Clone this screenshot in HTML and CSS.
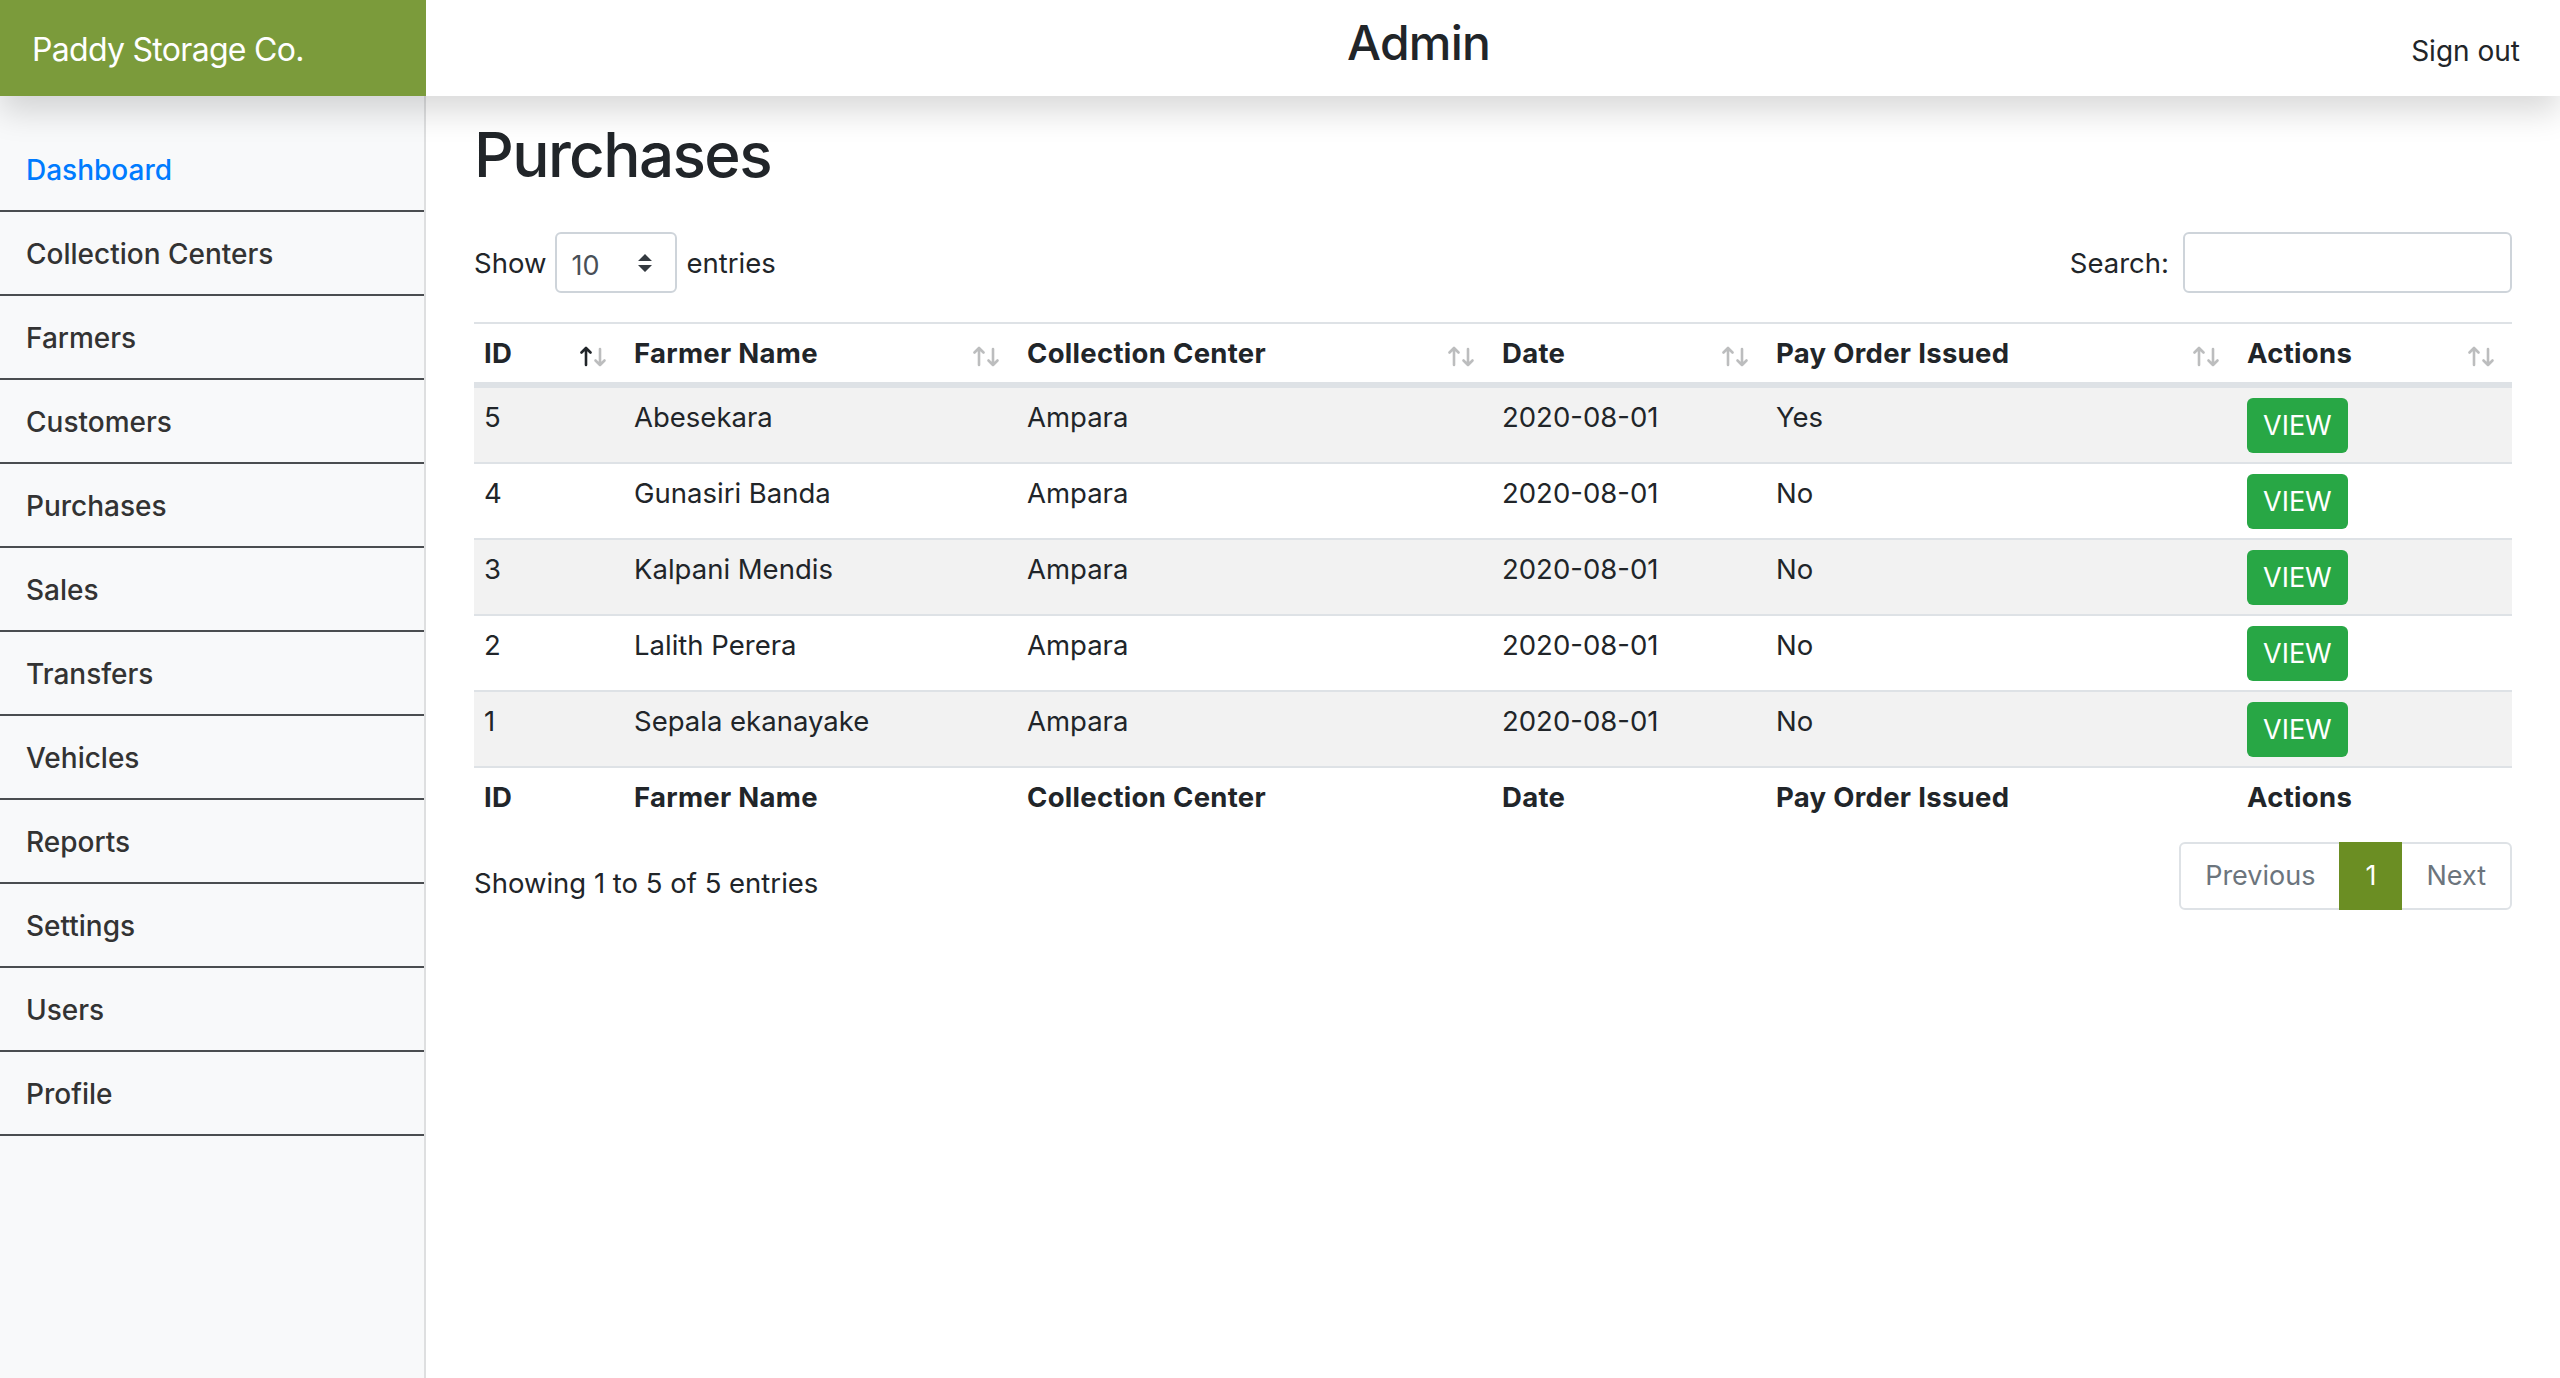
FILE: index.html
```html
<!DOCTYPE html>
<html lang="en">
<head>
<meta charset="utf-8">
<title>Purchases - Paddy Storage Co.</title>
<link rel="stylesheet" href="styles.css">
</head>
<body>
<header class="topbar">
  <a class="brand" href="#">Paddy Storage Co.</a>
  <h1 class="role-title">Admin</h1>
  <nav class="top-nav"><a class="top-link" href="#">Sign out</a></nav>
</header>
<div class="layout">
  <aside class="sidebar">
    <ul class="side-nav">
      <li><a class="side-link active" href="#">Dashboard</a></li>
      <li><a class="side-link" href="#">Collection Centers</a></li>
      <li><a class="side-link" href="#">Farmers</a></li>
      <li><a class="side-link" href="#">Customers</a></li>
      <li><a class="side-link" href="#">Purchases</a></li>
      <li><a class="side-link" href="#">Sales</a></li>
      <li><a class="side-link" href="#">Transfers</a></li>
      <li><a class="side-link" href="#">Vehicles</a></li>
      <li><a class="side-link" href="#">Reports</a></li>
      <li><a class="side-link" href="#">Settings</a></li>
      <li><a class="side-link" href="#">Users</a></li>
      <li><a class="side-link" href="#">Profile</a></li>
    </ul>
  </aside>
  <main class="main">
    <h2 class="page-title">Purchases</h2>
    <div class="dt-controls">
      <div class="dt-length">
        <span>Show</span>
        <div class="fake-select">
          <span>10</span>
          <svg class="select-caret" width="16" height="18" viewBox="0 0 16 18"><path d="M8 0 L15 7 L1 7 Z M8 18 L15 11 L1 11 Z" fill="#343a40"/></svg>
        </div>
        <span>entries</span>
      </div>
      <div class="dt-search">
        <span>Search:</span>
        <div class="search-input"></div>
      </div>
    </div>
    <table class="data-table">
      <colgroup>
        <col class="c-id"><col class="c-name"><col class="c-center"><col class="c-date"><col class="c-pay"><col class="c-act">
      </colgroup>
      <thead>
        <tr>
          <th class="sort sort-asc">ID<svg class="sort-icon" width="27" height="21" viewBox="0 0 27 21"><g fill="none" stroke="#212529" stroke-width="2.6" stroke-linecap="round" stroke-linejoin="round"><path class="ar-up" d="M6 19V2M1.5 6.5L6 2l4.5 4.5"/><path class="ar-down" d="M20 3v16M15.5 14.5L20 19l4.5-4.5"/></g></svg></th>
          <th class="sort">Farmer Name<svg class="sort-icon" width="27" height="21" viewBox="0 0 27 21"><g fill="none" stroke="#212529" stroke-width="2.6" stroke-linecap="round" stroke-linejoin="round"><path class="ar-up" d="M6 19V2M1.5 6.5L6 2l4.5 4.5"/><path class="ar-down" d="M20 3v16M15.5 14.5L20 19l4.5-4.5"/></g></svg></th>
          <th class="sort">Collection Center<svg class="sort-icon" width="27" height="21" viewBox="0 0 27 21"><g fill="none" stroke="#212529" stroke-width="2.6" stroke-linecap="round" stroke-linejoin="round"><path class="ar-up" d="M6 19V2M1.5 6.5L6 2l4.5 4.5"/><path class="ar-down" d="M20 3v16M15.5 14.5L20 19l4.5-4.5"/></g></svg></th>
          <th class="sort">Date<svg class="sort-icon" width="27" height="21" viewBox="0 0 27 21"><g fill="none" stroke="#212529" stroke-width="2.6" stroke-linecap="round" stroke-linejoin="round"><path class="ar-up" d="M6 19V2M1.5 6.5L6 2l4.5 4.5"/><path class="ar-down" d="M20 3v16M15.5 14.5L20 19l4.5-4.5"/></g></svg></th>
          <th class="sort">Pay Order Issued<svg class="sort-icon" width="27" height="21" viewBox="0 0 27 21"><g fill="none" stroke="#212529" stroke-width="2.6" stroke-linecap="round" stroke-linejoin="round"><path class="ar-up" d="M6 19V2M1.5 6.5L6 2l4.5 4.5"/><path class="ar-down" d="M20 3v16M15.5 14.5L20 19l4.5-4.5"/></g></svg></th>
          <th class="sort">Actions<svg class="sort-icon" width="27" height="21" viewBox="0 0 27 21"><g fill="none" stroke="#212529" stroke-width="2.6" stroke-linecap="round" stroke-linejoin="round"><path class="ar-up" d="M6 19V2M1.5 6.5L6 2l4.5 4.5"/><path class="ar-down" d="M20 3v16M15.5 14.5L20 19l4.5-4.5"/></g></svg></th>
        </tr>
      </thead>
      <tbody>
        <tr class="odd"><td>5</td><td>Abesekara</td><td>Ampara</td><td>2020-08-01</td><td>Yes</td><td><a class="btn-view" href="#">VIEW</a></td></tr>
        <tr><td>4</td><td>Gunasiri Banda</td><td>Ampara</td><td>2020-08-01</td><td>No</td><td><a class="btn-view" href="#">VIEW</a></td></tr>
        <tr class="odd"><td>3</td><td>Kalpani Mendis</td><td>Ampara</td><td>2020-08-01</td><td>No</td><td><a class="btn-view" href="#">VIEW</a></td></tr>
        <tr><td>2</td><td>Lalith Perera</td><td>Ampara</td><td>2020-08-01</td><td>No</td><td><a class="btn-view" href="#">VIEW</a></td></tr>
        <tr class="odd"><td>1</td><td>Sepala ekanayake</td><td>Ampara</td><td>2020-08-01</td><td>No</td><td><a class="btn-view" href="#">VIEW</a></td></tr>
      </tbody>
      <tfoot>
        <tr><th>ID</th><th>Farmer Name</th><th>Collection Center</th><th>Date</th><th>Pay Order Issued</th><th>Actions</th></tr>
      </tfoot>
    </table>
    <div class="dt-bottom">
      <div class="dt-info">Showing 1 to 5 of 5 entries</div>
      <ul class="pagination">
        <li class="page disabled first"><span class="page-link">Previous</span></li>
        <li class="page active"><span class="page-link">1</span></li>
        <li class="page disabled last"><span class="page-link">Next</span></li>
      </ul>
    </div>
  </main>
</div>
</body>
</html>
```
FILE: styles.css
```css
* { box-sizing: border-box; }
html, body { margin: 0; padding: 0; }
body {
  font-family: "Inter", "Noto Sans", "Liberation Sans", sans-serif;
  color: #212529;
  background: #fff;
  min-height: 100vh;
  display: flex;
  flex-direction: column;
}
a { text-decoration: none; }

.topbar {
  position: relative;
  z-index: 2;
  display: flex;
  height: 96px;
  background: #fff;
  box-shadow: 0 16px 32px rgba(0,0,0,.15);
}
.brand {
  width: 426px;
  flex: 0 0 426px;
  background: #7b9b3b;
  color: #fff;
  font-size: 32px;
  letter-spacing: -0.7px;
  line-height: 48px;
  padding: 3px 0 0 32px;
  display: flex;
  align-items: center;
}
.role-title {
  flex: 1;
  margin: 14px 0 0;
  text-align: center;
  font-size: 48px;
  font-weight: 500;
  letter-spacing: -0.8px;
  line-height: 57.6px;
  align-self: flex-start;
}
.top-nav { align-self: flex-start; padding: 30px 40px 0 0; }
.top-link { color: #212529; font-size: 28px; line-height: 42px; }

.layout { flex: 1; display: flex; }
.sidebar {
  width: 426px;
  flex: 0 0 426px;
  background: #f8f9fa;
  box-shadow: inset -2px 0 0 rgba(0,0,0,.1);
  padding-top: 32px;
}
.side-nav { list-style: none; margin: 0; padding: 0; }
.side-link {
  display: flex;
  align-items: center;
  height: 84px;
  padding: 2px 26px 0;
  border-bottom: 2px solid #4a4d50;
  margin-right: 2px;
  font-size: 28px;
  font-weight: 500;
  color: #333;
}
.side-link.active { color: #007bff; }

.main { flex: 1; padding: 0 48px; }
.page-title {
  margin: 22px 0 0;
  font-size: 62px;
  font-weight: 500;
  letter-spacing: -1.6px;
  line-height: 74px;
}

.dt-controls {
  margin-top: 40px;
  display: flex;
  justify-content: space-between;
  align-items: center;
  font-size: 27.5px;
}
.dt-length { display: flex; align-items: center; gap: 9px; }
.fake-select {
  width: 122px;
  height: 61px;
  border: 2px solid #ced4da;
  border-radius: 6px;
  display: flex;
  align-items: center;
  justify-content: space-between;
  padding: 5px 22px 0 14px;
  color: #495057;
  font-size: 27px;
}
.select-caret { margin-top: -4px; }
.dt-search { display: flex; align-items: center; gap: 14px; }
.search-input {
  width: 329px;
  height: 61px;
  border: 2px solid #ced4da;
  border-radius: 6px;
}

.data-table {
  margin-top: 29px;
  width: 100%;
  table-layout: fixed;
  border-collapse: separate;
  border-spacing: 0;
  font-size: 27.5px;
  line-height: 39px;
}
.c-id { width: 150px; }
.c-name { width: 393px; }
.c-center { width: 475px; }
.c-date { width: 274px; }
.c-pay { width: 471px; }
.c-act { width: 275px; }
.data-table th, .data-table td {
  padding: 9.5px 10px;
  text-align: left;
  vertical-align: top;
  border-top: 2px solid #dee2e6;
}
.data-table th { font-weight: 700; font-size: 27.5px; letter-spacing: 0.3px; }
.data-table thead th { border-bottom: 4px solid #dee2e6; position: relative; }
.data-table tbody tr.odd td { background: #f2f2f2; }

.sort-icon {
  position: absolute;
  right: 17px;
  top: 22px;
}
.sort-icon .ar-up, .sort-icon .ar-down { opacity: .3; }
.sort-asc .sort-icon .ar-up { opacity: 1; }

.btn-view {
  display: inline-block;
  height: 55px;
  line-height: 55px;
  padding: 0 16px;
  background: #28a745;
  color: #fff;
  border-radius: 6px;
  font-size: 27px;
}

.dt-bottom {
  margin-top: 16px;
  display: flex;
  justify-content: space-between;
  align-items: flex-start;
  font-size: 27.5px;
}
.dt-info { padding-top: 22px; line-height: 39px; }
.pagination { list-style: none; margin: 0; padding: 0; display: flex; }
.page-link {
  display: block;
  padding: 16px 24px;
  border: 2px solid #dee2e6;
  margin-left: -2px;
  font-size: 27px;
  line-height: 32px;
  background: #fff;
}
.page.first .page-link { margin-left: 0; border-radius: 6px 0 0 6px; }
.page.last .page-link { border-radius: 0 6px 6px 0; }
.page.disabled .page-link { color: #6c757d; }
.page.active .page-link { background: #6b8e23; border-color: #6b8e23; color: #fff; position: relative; z-index: 1; }
```
